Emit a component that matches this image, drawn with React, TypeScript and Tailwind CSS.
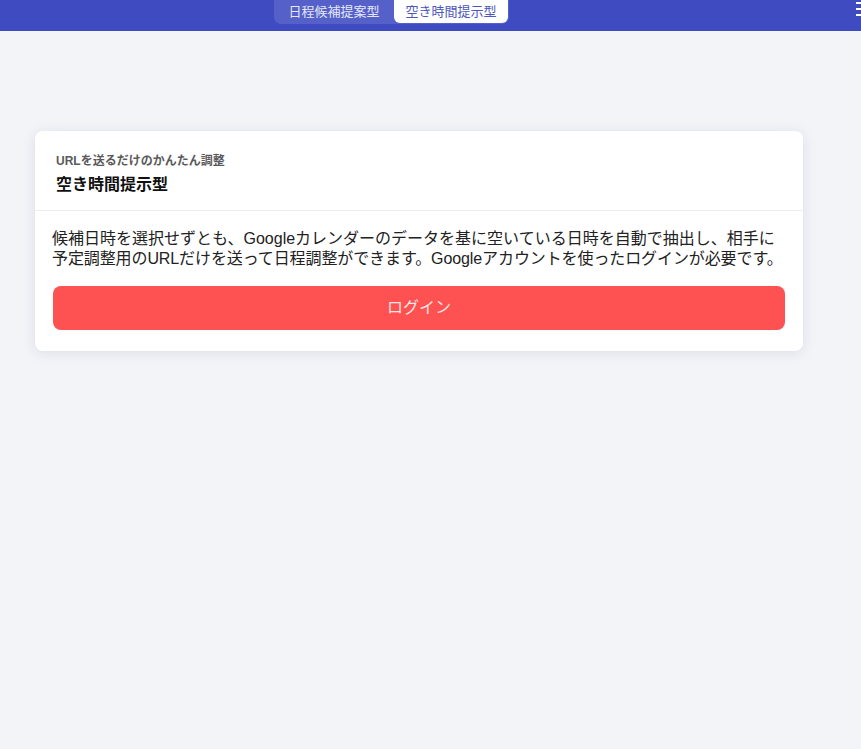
import React from 'react';

const App = () => {
  return (
    <div
      className="min-h-[749px] bg-[#f3f4f8] text-[#222]"
      style={{ fontFamily: '"Liberation Sans", "Noto Sans CJK JP", sans-serif' }}
    >
      <header className="relative h-[31px] bg-[#3e4bc1] overflow-hidden">
        <div className="absolute left-[274px] top-[-6px] flex h-[30px] rounded-b-[7px] bg-[#5561c9] pr-px">
          <button className="h-full w-[120px] pt-[6px] text-[13px] leading-[18px] text-[#e4e7f7]">
            日程候補提案型
          </button>
          <button className="h-[29px] w-[114px] rounded-b-[6px] bg-white pt-[6px] text-[13px] leading-[18px] text-[#4d57bd]">
            空き時間提示型
          </button>
        </div>
        <div className="absolute left-[856px] top-[2px] flex flex-col gap-[4px]">
          <span className="block h-[2px] w-[10px] bg-white" />
          <span className="block h-[2px] w-[10px] bg-white" />
          <span className="block h-[2px] w-[10px] bg-white" />
        </div>
      </header>

      <main className="pt-[100px] pl-[35px]">
        <div className="w-[768px] rounded-[8px] bg-white shadow-[0_2px_14px_rgba(30,40,80,0.10)]">
          <div className="border-b border-[#eceef2] px-[21px] pt-[22px] pb-[14px]">
            <p className="text-[12px] font-bold leading-[16px] text-[#5a5a5a]">URLを送るだけのかんたん調整</p>
            <h2 className="mt-[5px] text-[16px] font-bold leading-[22px] text-[#111]">空き時間提示型</h2>
          </div>
          <div className="px-[17px] pt-[18px] pb-[21px]">
            <p className="text-[16px] leading-[20px] text-[#222] whitespace-nowrap">
              候補日時を選択せずとも、Googleカレンダーのデータを基に空いている日時を自動で抽出し、相手に
              <br />
              <span className="tracking-[-0.1px]">
                予定調整用のURLだけを送って日程調整ができます。Googleアカウントを使ったログインが必要です。
              </span>
            </p>
            <button className="mt-[17px] ml-px h-[44px] w-[732px] rounded-[8px] bg-[#fe5152] text-[16px] text-[#ffe4e4]">
              ログイン
            </button>
          </div>
        </div>
      </main>
    </div>
  );
};

export default App;
